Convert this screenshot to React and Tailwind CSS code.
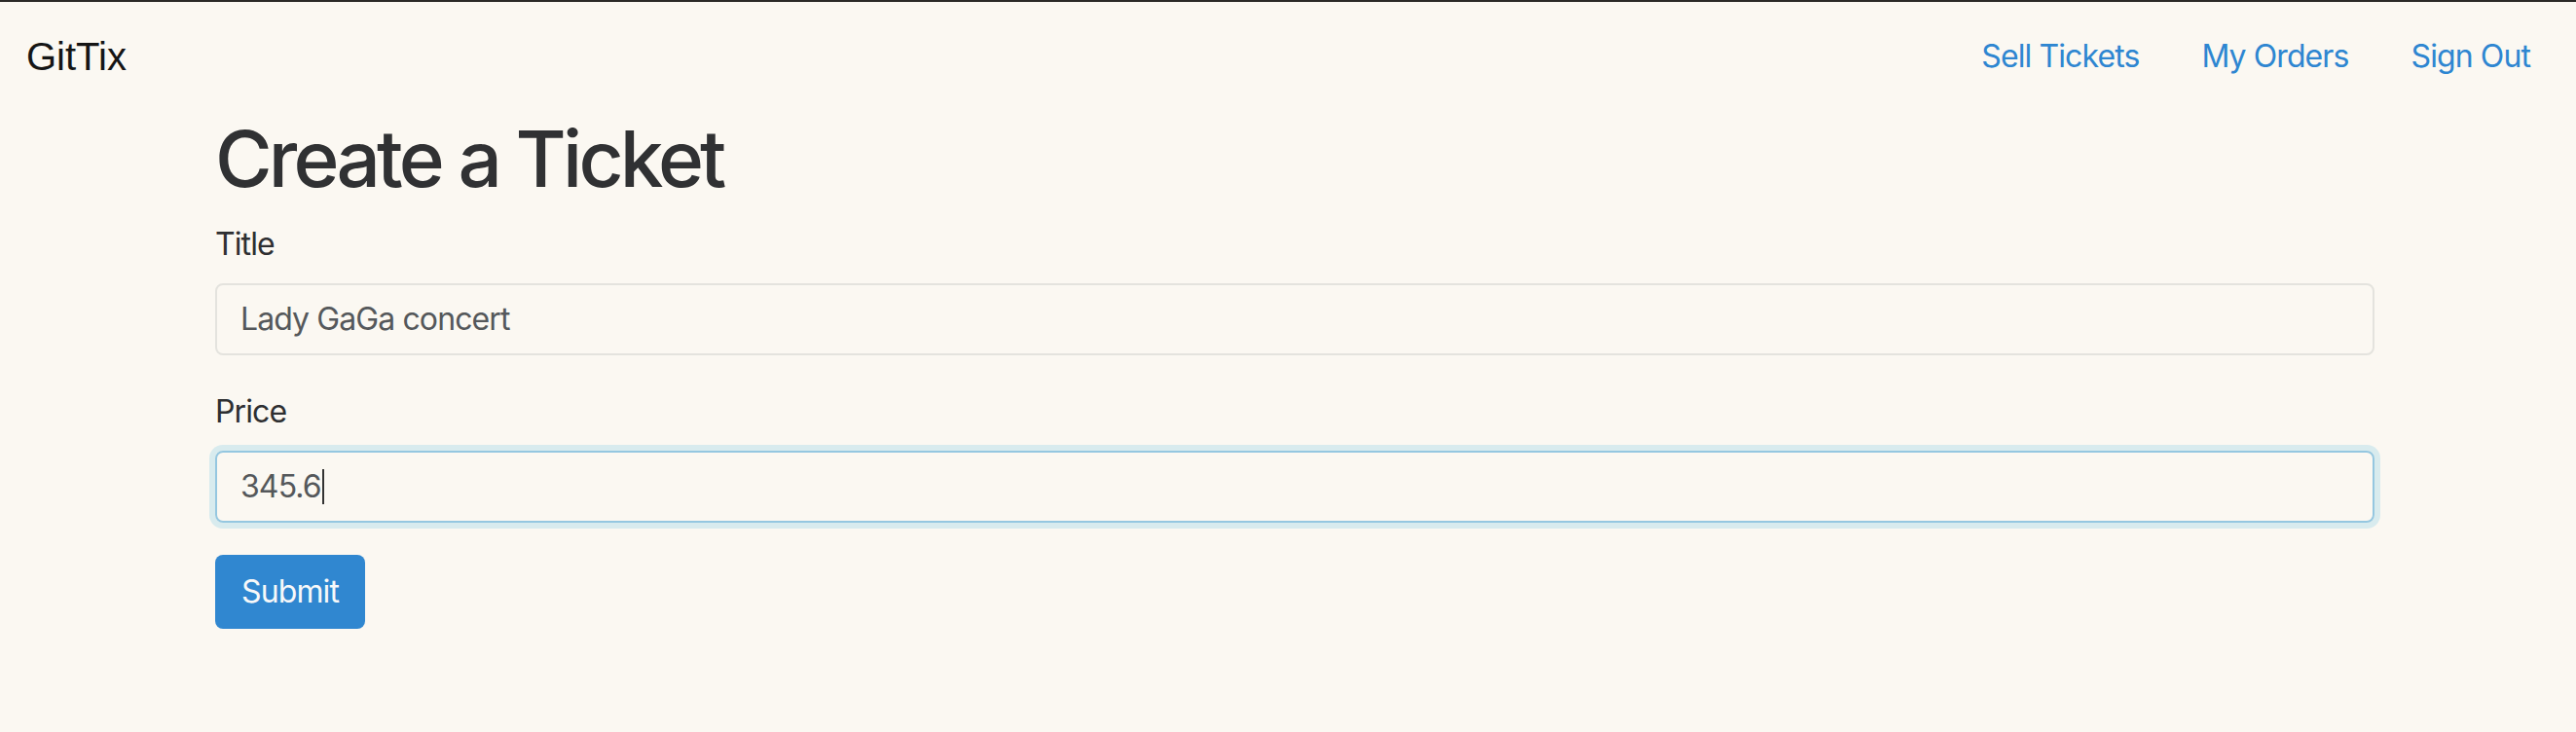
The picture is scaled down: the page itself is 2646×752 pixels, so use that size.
export default function App() {
  const font = { fontFamily: 'Inter, "Liberation Sans", sans-serif' };
  return (
    <div className="min-h-[752px] bg-[#fbf8f2] text-[#303133]" style={font}>
      <div className="h-[2px] bg-[#2b2a27]" />
      <nav className="flex h-[112px] items-center justify-between pl-[27px] pr-[15px]">
        <a className="text-[40px] leading-[60px] text-[#151515]" style={{ fontFamily: '"Liberation Sans", Arial, sans-serif' }}>
          GitTix
        </a>
        <ul className="flex items-center">
          <li><a className="block px-[32px] text-[32px] leading-[48px] tracking-[-0.9px] text-[#2e86d1]">Sell Tickets</a></li>
          <li><a className="block px-[32px] text-[32px] leading-[48px] tracking-[-0.9px] text-[#2e86d1]">My Orders</a></li>
          <li><a className="block px-[32px] text-[32px] leading-[48px] tracking-[-0.9px] text-[#2e86d1]">Sign Out</a></li>
        </ul>
      </nav>
      <div className="ml-[221px] mt-[1px] w-[2218px]">
        <h1 className="text-[80px] font-medium leading-[96px] tracking-[-3.8px] text-[#303133]">Create a Ticket</h1>
        <form className="mt-[16px]">
          <div className="mb-[34px]">
            <label className="mb-[16px] block text-[32px] leading-[48px] tracking-[-0.9px] text-[#2e2f31]">Title</label>
            <div className="flex h-[74px] items-center rounded-[8px] border-2 border-[#e4e3de] px-[24px] text-[32px] leading-[48px] tracking-[-0.9px] text-[#55585b]">
              Lady GaGa concert
            </div>
          </div>
          <div className="mb-[33px]">
            <label className="mb-[16px] block text-[32px] leading-[48px] tracking-[-0.9px] text-[#2e2f31]">Price</label>
            <div className="flex h-[74px] items-center rounded-[8px] border-2 border-[#95c7e0] px-[24px] text-[32px] leading-[48px] tracking-[-0.9px] text-[#55585b] shadow-[0_0_0_6px_#d8ebee]">
              345.6<span className="ml-[1px] inline-block h-[36px] w-[2px] bg-[#333]" />
            </div>
          </div>
          <button type="button" className="flex h-[76px] w-[154px] items-center justify-center rounded-[8px] bg-[#3087d0] text-[32px] leading-[48px] tracking-[-0.9px] text-[#f7f8f9]">
            Submit
          </button>
        </form>
      </div>
    </div>
  );
}
